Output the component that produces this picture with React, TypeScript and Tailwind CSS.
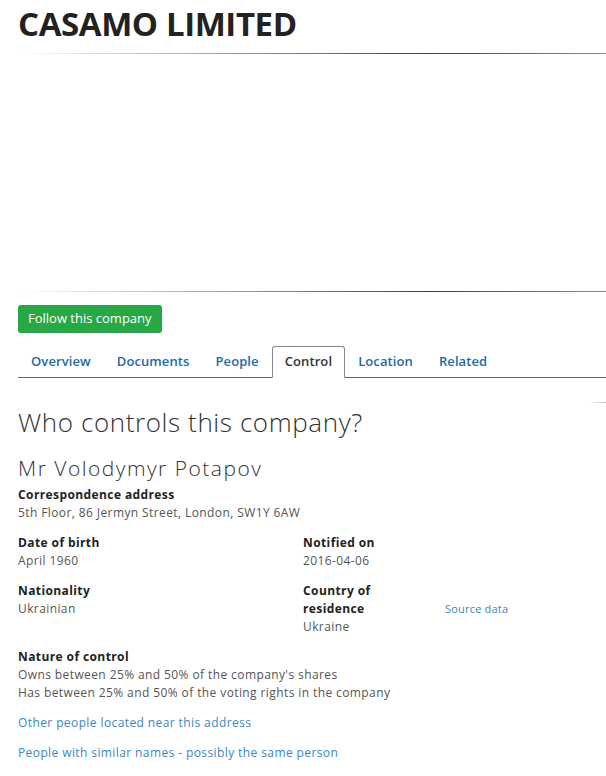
import React from "react";

const hrGrad =
  "h-px bg-[linear-gradient(to_right,rgba(0,0,0,0),rgba(0,0,0,0.75)_70%,rgba(0,0,0,0.45))]";

export default function App() {
  const tabs = ["Overview", "Documents", "People", "Control", "Location", "Related"];
  return (
    <div className="min-h-[776px] w-[606px] overflow-hidden bg-white text-[#333] [font-family:'Open_Sans',sans-serif]">
      <div className="pl-[18px] pt-[4px]">
        <h1 className="text-[33px] font-bold leading-[40px] tracking-[-0.4px] text-[#222]">CASAMO LIMITED</h1>
        <div className={`mt-[9px] ${hrGrad}`} />
        <div className="h-[237px]" />
        <div className={hrGrad} />
        <button className="mt-[13px] h-[28px] rounded-[3px] bg-[#28a745] px-[10px] text-[13px] text-white">
          Follow this company
        </button>
        <div className="mt-[13px] flex h-[32px] items-end border-b border-[#666]">
          {tabs.map((t) => (
            <div
              key={t}
              className={
                t === "Control"
                  ? "-mb-px flex h-[32px] items-center rounded-t-[3px] border border-b-white border-[#888] bg-white px-[12px] text-[13px] font-semibold tracking-[0.1px] text-[#333]"
                  : "flex h-[31px] items-center px-[13px] text-[13px] font-semibold tracking-[0.1px] text-[#1d6aa5]"
              }
            >
              {t}
            </div>
          ))}
        </div>
        <div className="mt-[24px] flex justify-end">
          <div className="h-px w-[18px] bg-[linear-gradient(to_right,rgba(0,0,0,0),rgba(0,0,0,0.25))]" />
        </div>
        <h2 className="mt-[3px] text-[26px] font-light leading-[32px] tracking-[0.6px] text-[#333]">Who controls this company?</h2>
        <h3 className="mt-[17px] text-[21px] font-light leading-[26px] tracking-[1.5px] text-[#333]">Mr Volodymyr Potapov</h3>
        <div className="mt-[5px] text-[12px] leading-[18px] tracking-[0.4px]">
          <div className="font-bold text-[#222]">Correspondence address</div>
          <div className="text-[#555]">5th Floor, 86 Jermyn Street, London, SW1Y 6AW</div>
        </div>
        <div className="mt-[12px] flex text-[12px] leading-[18px] tracking-[0.4px]">
          <div className="w-[285px]">
            <div className="font-bold text-[#222]">Date of birth</div>
            <div className="text-[#555]">April 1960</div>
          </div>
          <div>
            <div className="font-bold text-[#222]">Notified on</div>
            <div className="text-[#555]">2016-04-06</div>
          </div>
        </div>
        <div className="mt-[12px] flex text-[12px] leading-[18px] tracking-[0.4px]">
          <div className="w-[285px] shrink-0">
            <div className="font-bold text-[#222]">Nationality</div>
            <div className="text-[#555]">Ukrainian</div>
          </div>
          <div className="w-[142px] shrink-0">
            <div className="font-bold text-[#222]">
              Country of
              <br />
              residence
            </div>
            <div className="text-[#555]">Ukraine</div>
          </div>
          <div className="pt-[18px] text-[11px] tracking-[0.2px] text-[#3a86c2]">Source data</div>
        </div>
        <div className="mt-[12px] text-[12px] leading-[18px] tracking-[0.4px]">
          <div className="font-bold text-[#222]">Nature of control</div>
          <div className="text-[#555]">Owns between 25% and 50% of the company's shares</div>
          <div className="text-[#555]">Has between 25% and 50% of the voting rights in the company</div>
        </div>
        <div className="mt-[12px] text-[12px] leading-[18px] tracking-[0.4px] text-[#3a86c2]">Other people located near this address</div>
        <div className="mt-[12px] text-[12px] leading-[18px] tracking-[0.4px] text-[#3a86c2]">People with similar names - possibly the same person</div>
      </div>
    </div>
  );
}
